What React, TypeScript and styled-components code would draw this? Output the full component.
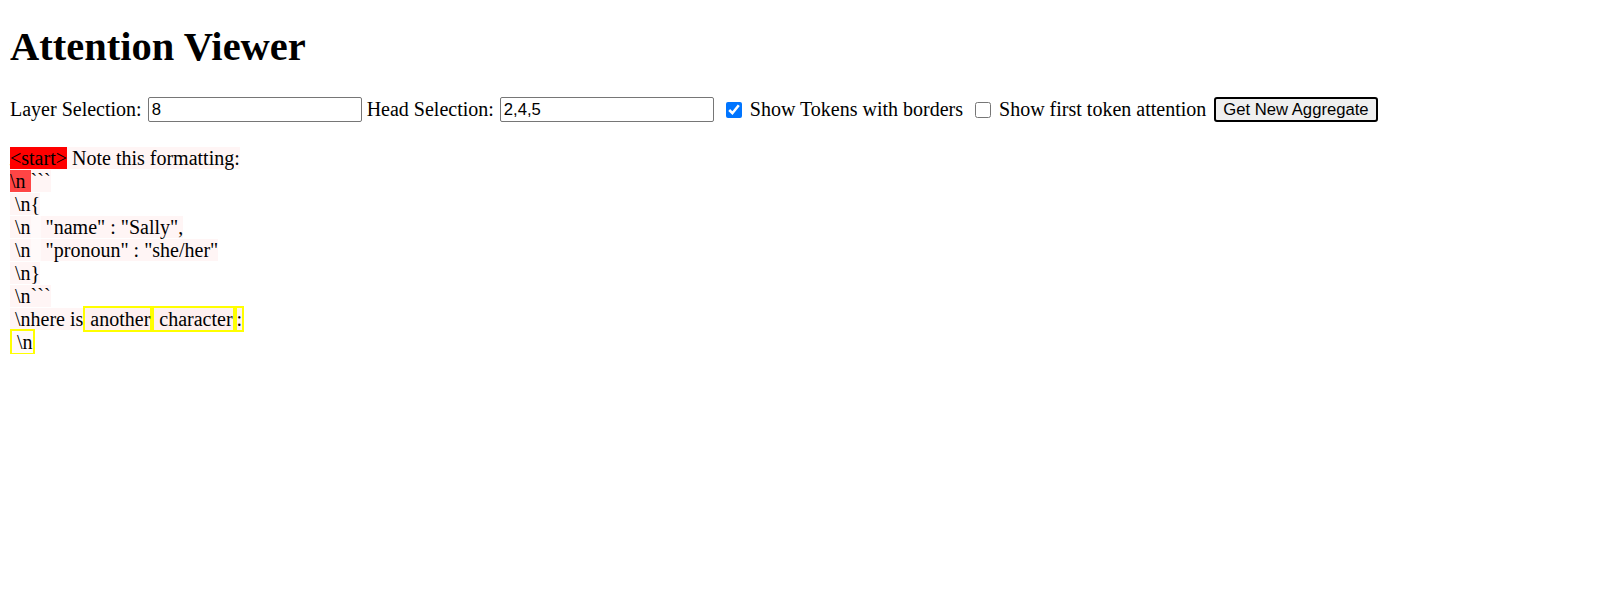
import React from "react";
import styled, { createGlobalStyle } from "styled-components";

const GlobalStyle = createGlobalStyle`
  body {
    margin: 10px;
    font-family: "Liberation Serif", "Times New Roman", serif;
    font-size: 20px;
    color: #000;
    background: #fff;
  }
`;

const Title = styled.h1`
  font-size: 40.5px;
  font-weight: bold;
  margin: 14px 0 0;
  line-height: 46px;
`;

const Controls = styled.div`
  display: flex;
  align-items: center;
  margin-top: 27px;
  height: 25px;
`;

const Label = styled.span<{ $gap?: number }>`
  white-space: nowrap;
  margin-right: ${(p) => p.$gap ?? 5}px;
`;

const TextInput = styled.input`
  box-sizing: border-box;
  width: 214px;
  height: 25px;
  padding: 0 3px;
  margin-right: 5px;
  border: 1px solid #767676;
  border-radius: 2px;
  font-family: "Liberation Sans", Arial, sans-serif;
  font-size: 16.67px;
  color: #000;
  background: #fff;
`;

const Check = styled.input`
  width: 16px;
  height: 16px;
  margin: 0 8px 0 7px;
  accent-color: #0075ff;
`;

const Button = styled.button`
  box-sizing: border-box;
  height: 25px;
  padding: 0 7px;
  border: 2px solid #000;
  border-radius: 3px;
  background: #efefef;
  font-family: "Liberation Sans", Arial, sans-serif;
  font-size: 16.67px;
  color: #000;
  white-space: nowrap;
`;

const Tokens = styled.div`
  margin-top: 25px;
  line-height: 23px;
`;

const Line = styled.div`
  white-space: pre;
`;

const Token = styled.span<{ $bg: string; $bordered?: boolean }>`
  background: ${(p) => p.$bg};
  ${(p) => (p.$bordered ? "border: 2.5px solid #ffff00;" : "")}
`;

type Tok = { t: string; bg: string; b?: boolean };

const FAINT = "#fff5f5";
const FAINT2 = "#fef0f0";
const WHITE = "#fffafa";

const lines: Tok[][] = [
  [
    { t: "<start>", bg: "#ff0000" },
    { t: " Note", bg: FAINT },
    { t: " this", bg: FAINT },
    { t: " formatting", bg: FAINT },
    { t: ":", bg: FAINT },
  ],
  [
    { t: "\\n ", bg: "#ff4545" },
    { t: "```", bg: FAINT },
  ],
  [
    { t: " \\n", bg: FAINT },
    { t: "{", bg: FAINT },
  ],
  [
    { t: " \\n", bg: FAINT },
    { t: "  ", bg: WHITE },
    { t: " \"name\"", bg: FAINT },
    { t: " :", bg: FAINT },
    { t: " \"Sally\"", bg: FAINT },
    { t: ",", bg: FAINT },
  ],
  [
    { t: " \\n", bg: FAINT },
    { t: "  ", bg: WHITE },
    { t: " \"pronoun\"", bg: FAINT },
    { t: " :", bg: FAINT },
    { t: " \"she/her\"", bg: FAINT },
  ],
  [
    { t: " \\n", bg: FAINT },
    { t: "}", bg: FAINT },
  ],
  [
    { t: " \\n", bg: FAINT },
    { t: "```", bg: FAINT },
  ],
  [
    { t: " \\n", bg: FAINT },
    { t: "here", bg: FAINT },
    { t: " is", bg: FAINT },
    { t: " another", bg: FAINT2, b: true },
    { t: " character", bg: FAINT2, b: true },
    { t: ":", bg: FAINT2, b: true },
  ],
  [{ t: " \\n", bg: WHITE, b: true }],
];

export default function App() {
  return (
    <>
      <GlobalStyle />
      <Title>Attention Viewer</Title>
      <Controls>
        <Label $gap={6}>Layer Selection:</Label>
        <TextInput type="text" defaultValue="8" />
        <Label $gap={6}>Head Selection:</Label>
        <TextInput type="text" defaultValue="2,4,5" />
        <Check type="checkbox" defaultChecked />
        <Label $gap={5}>Show Tokens with borders</Label>
        <Check type="checkbox" />
        <Label $gap={8}>Show first token attention</Label>
        <Button>Get New Aggregate</Button>
      </Controls>
      <Tokens>
        {lines.map((line, i) => (
          <Line key={i}>
            {line.map((tok, j) => (
              <Token key={j} $bg={tok.bg} $bordered={tok.b}>
                {tok.t}
              </Token>
            ))}
          </Line>
        ))}
      </Tokens>
    </>
  );
}
